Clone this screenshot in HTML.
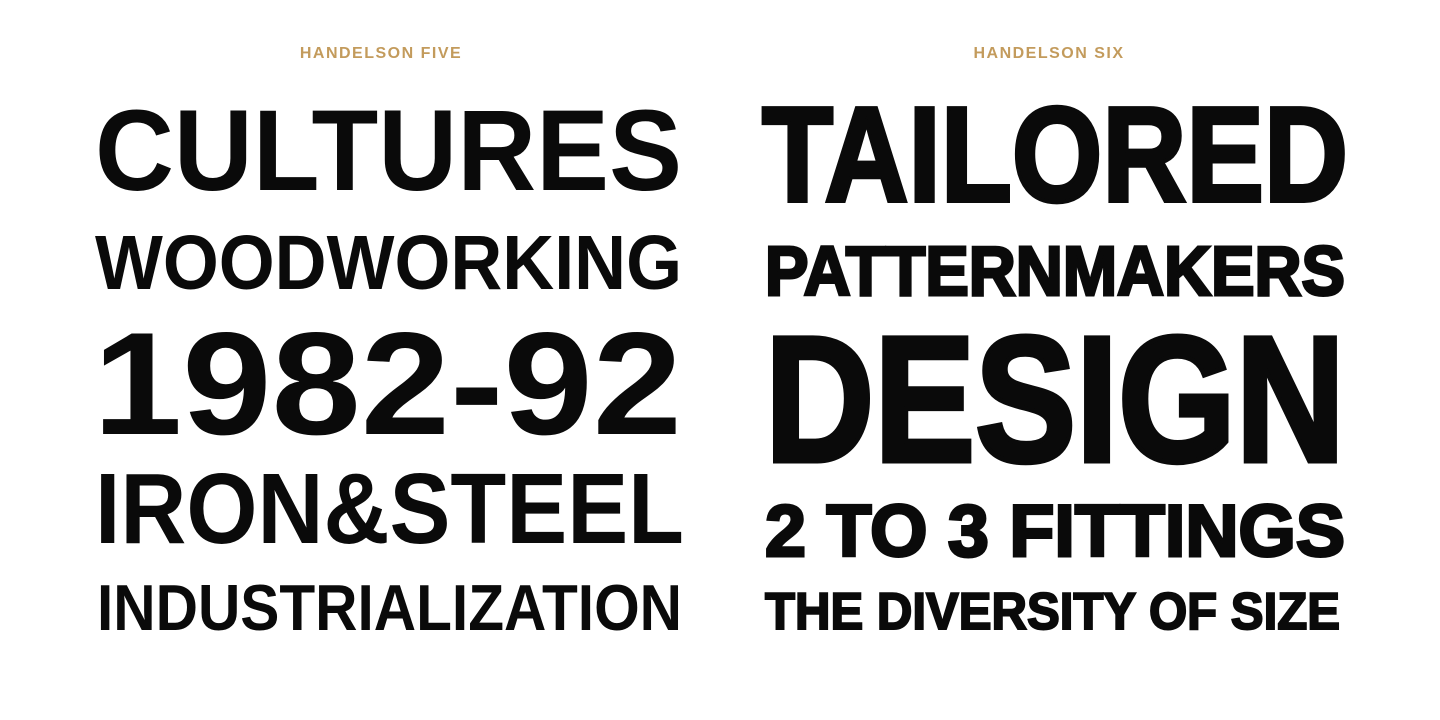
<!DOCTYPE html>
<html><head><meta charset="utf-8"><style>
html,body{margin:0;padding:0;background:#fff;}
svg{display:block;}
text{font-family:"Liberation Sans",sans-serif;font-weight:bold;fill:#0a0a0a;}
.h{fill:#c39b5c;font-size:16px;letter-spacing:1.5px;}
</style></head><body>
<svg width="1440" height="720" viewBox="0 0 1440 720" xmlns="http://www.w3.org/2000/svg">
<text class="h" x="381" y="58" text-anchor="middle">HANDELSON FIVE</text>
<text class="h" x="1049" y="58" text-anchor="middle">HANDELSON SIX</text>

<text x="95" y="190" font-size="115" textLength="587" lengthAdjust="spacingAndGlyphs">CULTURES</text>
<text x="95" y="289" font-size="77" textLength="587" lengthAdjust="spacingAndGlyphs">WOODWORKING</text>
<text x="93" y="434" font-size="146" textLength="589" lengthAdjust="spacingAndGlyphs">1982-92</text>
<text x="95" y="543" font-size="100" textLength="589" lengthAdjust="spacingAndGlyphs">IRON&amp;STEEL</text>
<text x="97" y="630" font-size="65" textLength="585" lengthAdjust="spacingAndGlyphs">INDUSTRIALIZATION</text>

<text x="762" y="201" font-size="135" textLength="586" lengthAdjust="spacingAndGlyphs" stroke="#0a0a0a" stroke-width="4">TAILORED</text>
<text x="765" y="295" font-size="70" textLength="580" lengthAdjust="spacingAndGlyphs" stroke="#0a0a0a" stroke-width="3">PATTERNMAKERS</text>
<text x="765" y="461" font-size="179" textLength="580" lengthAdjust="spacingAndGlyphs" stroke="#0a0a0a" stroke-width="5">DESIGN</text>
<text x="765" y="556" font-size="73" textLength="580" lengthAdjust="spacingAndGlyphs" stroke="#0a0a0a" stroke-width="3">2 TO 3 FITTINGS</text>
<text x="765" y="629" font-size="52" textLength="575" lengthAdjust="spacingAndGlyphs" stroke="#0a0a0a" stroke-width="2">THE DIVERSITY OF SIZE</text>
</svg>
</body></html>
